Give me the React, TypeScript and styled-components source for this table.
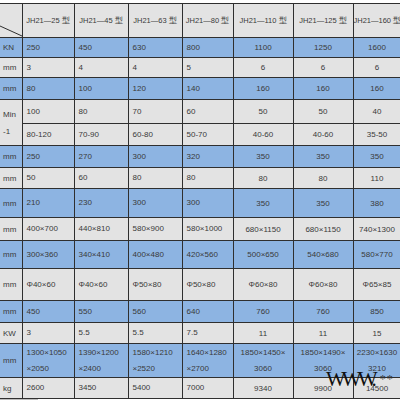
import styled, { createGlobalStyle } from "styled-components";

const BLUE = "#8db4e2";
const GRAY = "#e3e3e3";
const LINE = "#2f2f2f";
const TEXT = "#3a3a3a";

const COLS = [22, 52, 54, 54, 51, 60, 60, 48];

type Row = {
  unit: string;
  h: number;
  blue?: boolean;
  values: string[];
};

const HEAD = [
  "JH21—25 型",
  "JH21—45 型",
  "JH21—63 型",
  "JH21—80 型",
  "JH21—110 型",
  "JH21—125 型",
  "JH21—160 型",
];

const ROWS_TOP: Row[] = [
  { unit: "KN", h: 20, blue: true, values: ["250", "450", "630", "800", "1100", "1250", "1600"] },
  { unit: "mm", h: 20, values: ["3", "4", "4", "5", "6", "6", "6"] },
  { unit: "mm", h: 22, blue: true, values: ["80", "100", "120", "140", "160", "160", "160"] },
];

const MIN_A = ["100", "80", "70", "60", "50", "50", "40"];
const MIN_B = ["80-120", "70-90", "60-80", "50-70", "40-60", "40-60", "35-50"];

const ROWS_BOTTOM: Row[] = [
  { unit: "mm", h: 22, blue: true, values: ["250", "270", "300", "320", "350", "350", "350"] },
  { unit: "mm", h: 21, values: ["50", "60", "80", "80", "80", "80", "110"] },
  { unit: "mm", h: 29, blue: true, values: ["210", "230", "300", "300", "350", "350", "380"] },
  {
    unit: "mm",
    h: 23,
    values: ["400×700", "440×810", "580×900", "580×1000", "680×1150", "680×1150", "740×1300"],
  },
  {
    unit: "mm",
    h: 28,
    blue: true,
    values: ["300×360", "340×410", "400×480", "420×560", "500×650", "540×680", "580×770"],
  },
  {
    unit: "mm",
    h: 32,
    values: ["Φ40×60", "Φ40×60", "Φ50×80", "Φ50×80", "Φ60×80", "Φ60×80", "Φ65×85"],
  },
  { unit: "mm", h: 22, blue: true, values: ["450", "550", "560", "640", "760", "760", "850"] },
  { unit: "KW", h: 21, values: ["3", "5.5", "5.5", "7.5", "11", "11", "15"] },
  {
    unit: "mm",
    h: 33,
    blue: true,
    values: [
      "1300×1050\n×2050",
      "1390×1200\n×2400",
      "1580×1210\n×2520",
      "1640×1280\n×2700",
      "1850×1450×\n3060",
      "1850×1490×\n3060",
      "2230×1630\n3210",
    ],
  },
  { unit: "kg", h: 21, values: ["2600", "3450", "5400", "7000", "9340", "9900", "14500"] },
];

const GlobalStyle = createGlobalStyle`
  body {
    margin: 0;
    background: #ffffff;
    overflow: hidden;
  }
`;

const Page = styled.div`
  position: relative;
  width: 400px;
  height: 400px;
  overflow: hidden;
  padding-top: 3px;
  box-sizing: border-box;
  font-family: "Liberation Sans", Arial, sans-serif;
  font-size: 8px;
  color: ${TEXT};
`;

const Sheet = styled.table`
  border-collapse: collapse;
  table-layout: fixed;
  width: ${COLS.reduce((a, b) => a + b, 0)}px;
`;

const Tr = styled.tr<{ $blue?: boolean; $h: number }>`
  height: ${(p) => p.$h}px;
  background: ${(p) => (p.$blue ? BLUE : GRAY)};
`;

const Cell = styled.td<{ $center?: boolean }>`
  border: 1px solid ${LINE};
  padding: 0 0 0 4px;
  text-align: ${(p) => (p.$center ? "center" : "left")};
  vertical-align: middle;
  white-space: pre-line;
  line-height: 16px;
  overflow: hidden;
  ${(p) => (p.$center ? "padding: 1px 0 0 0;" : "")}
`;

const Unit = styled.td`
  border: 1px solid ${LINE};
  border-left: 0;
  padding: 0 0 0 3px;
  vertical-align: middle;
  line-height: 17px;
  white-space: pre-line;
`;

const Corner = styled.td`
  position: relative;
  border: 1px solid ${LINE};
  border-left: 0;
  padding: 0;
`;

const Diagonal = styled.svg`
  position: absolute;
  left: 0;
  top: 0;
  width: 22px;
  height: 34px;
`;

const HeadCell = styled.td`
  border: 1px solid ${LINE};
  text-align: center;
  vertical-align: middle;
  font-size: 7.5px;
  white-space: nowrap;
  overflow: hidden;
  padding: 0;
`;

const Strip = styled.div`
  width: 38px;
  height: 4px;
  background: #bdbdbd;
`;

const Mark = styled.div`
  position: absolute;
  left: 326px;
  top: 367px;
  display: flex;
  align-items: flex-start;
  font-family: "Liberation Serif", "Times New Roman", serif;
  color: #111;
`;

const MarkWord = styled.span`
  font-size: 21px;
  letter-spacing: -4px;
  line-height: 24px;
`;

const MarkStars = styled.span`
  font-size: 12px;
  margin-left: 7px;
  margin-top: 5px;
  line-height: 14px;
  letter-spacing: 1px;
  color: #333;
`;

function DataRow({ row }: { row: Row }) {
  return (
    <Tr $blue={row.blue} $h={row.h}>
      <Unit>{row.unit}</Unit>
      {row.values.map((v, i) => (
        <Cell key={i} $center={i >= 4}>
          {v}
        </Cell>
      ))}
    </Tr>
  );
}

export default function App() {
  return (
    <Page>
      <GlobalStyle />
      <Sheet>
        <colgroup>
          {COLS.map((w, i) => (
            <col key={i} style={{ width: w }} />
          ))}
        </colgroup>
        <tbody>
          <Tr $h={34}>
            <Corner>
              <Diagonal viewBox="0 0 22 34">
                <line x1="0" y1="22" x2="22" y2="32" stroke={LINE} strokeWidth="1" />
              </Diagonal>
            </Corner>
            {HEAD.map((h) => (
              <HeadCell key={h}>{h}</HeadCell>
            ))}
          </Tr>
          {ROWS_TOP.map((r, i) => (
            <DataRow key={"t" + i} row={r} />
          ))}
          <Tr $h={24}>
            <Unit rowSpan={2}>{"Min\n-1"}</Unit>
            {MIN_A.map((v, i) => (
              <Cell key={i} $center={i >= 4}>
                {v}
              </Cell>
            ))}
          </Tr>
          <Tr $h={22}>
            {MIN_B.map((v, i) => (
              <Cell key={i} $center={i >= 4}>
                {v}
              </Cell>
            ))}
          </Tr>
          {ROWS_BOTTOM.map((r, i) => (
            <DataRow key={"b" + i} row={r} />
          ))}
        </tbody>
      </Sheet>
      <Strip />
      <Mark>
        <MarkWord>WWW.</MarkWord>
        <MarkStars>**</MarkStars>
      </Mark>
    </Page>
  );
}
